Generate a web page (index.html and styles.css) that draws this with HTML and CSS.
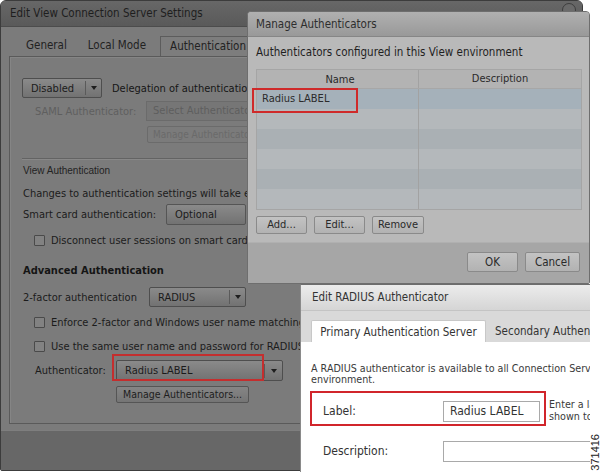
FILE: index.html
```html
<!DOCTYPE html>
<html>
<head>
<meta charset="utf-8">
<link rel="stylesheet" href="styles.css">
</head>
<body>
<div class="screen">
  <div class="main">
    <div class="main-title">
      <span>Edit View Connection Server Settings</span>
      <span class="close-icon"></span>
    </div>
    <div class="main-body">
      <div class="tabs">
        <div class="tab">General</div>
        <div class="tab">Local Mode</div>
        <div class="tab active">Authentication</div>
      </div>
      <div class="panel">
        <div class="row r-deleg">
          <div class="dd dd-disabled"><span class="dd-text">Disabled</span><span class="dd-btn"><i class="arrow"></i></span></div>
          <span class="strong-text">Delegation of authentication to VMware Horizon (SAML 2.0 Authenticator)</span>
        </div>
        <div class="row r-saml">
          <span class="muted label-saml">SAML Authenticator:</span>
          <div class="box-disabled">Select Authenticator</div>
        </div>
        <div class="row r-mgdis">
          <div class="btn-disabled">Manage Authenticators...</div>
        </div>
        <div class="sep"></div>
        <div class="small-head">View Authentication</div>
        <div class="row r-changes">Changes to authentication settings will take effect on the next user login.</div>
        <div class="row r-smart">
          <span class="lbl-smart">Smart card authentication:</span>
          <div class="dd dd-optional"><span class="dd-text">Optional</span></div>
        </div>
        <div class="row r-check1">
          <span class="cb"></span><span>Disconnect user sessions on smart card removal</span>
        </div>
        <div class="adv-head">Advanced Authentication</div>
        <div class="row r-2fa">
          <span class="lbl-2fa">2-factor authentication</span>
          <div class="dd dd-radius"><span class="dd-text">RADIUS</span><span class="dd-btn"><i class="arrow"></i></span></div>
        </div>
        <div class="row r-check2">
          <span class="cb"></span><span>Enforce 2-factor and Windows user name matching</span>
        </div>
        <div class="row r-check3">
          <span class="cb"></span><span>Use the same user name and password for RADIUS and Windows authentication</span>
        </div>
        <div class="row r-auth">
          <span class="lbl-auth">Authenticator:</span>
          <div class="dd dd-auth"><span class="dd-text">Radius LABEL</span><span class="dd-btn"><i class="arrow"></i></span></div>
        </div>
        <div class="row r-mg">
          <div class="btn-main">Manage Authenticators...</div>
        </div>
      </div>
    </div>
    <div class="main-footer"></div>
  </div>

  <div class="manage">
    <div class="manage-title">Manage Authenticators</div>
    <div class="manage-body">
      <div class="manage-intro">Authenticators configured in this View environment</div>
      <div class="grid">
        <div class="grid-head"><span class="c1">Name</span><span class="c2">Description</span></div>
        <div class="grid-row sel"><span class="c1">Radius LABEL</span><span class="c2"></span></div>
        <div class="grid-row odd"><span class="c1"></span><span class="c2"></span></div>
        <div class="grid-row even"><span class="c1"></span><span class="c2"></span></div>
        <div class="grid-row odd"><span class="c1"></span><span class="c2"></span></div>
        <div class="grid-row even"><span class="c1"></span><span class="c2"></span></div>
        <div class="grid-row odd"><span class="c1"></span><span class="c2"></span></div>
      </div>
      <div class="grid-btns">
        <div class="mbtn">Add...</div>
        <div class="mbtn">Edit...</div>
        <div class="mbtn">Remove</div>
      </div>
    </div>
    <div class="manage-footer">
      <div class="mbtn ok">OK</div>
      <div class="mbtn cancel">Cancel</div>
    </div>
  </div>

  <div class="radius">
    <div class="radius-title">Edit RADIUS Authenticator</div>
    <div class="radius-tabs">
      <div class="rtab active">Primary Authentication Server</div>
      <div class="rtab">Secondary Authentication Server</div>
    </div>
    <div class="radius-body">
      <p class="radius-note">A RADIUS authenticator is available to all Connection Server instances in this<br>environment.</p>
      <div class="field f-label">
        <span class="f-name">Label:</span>
        <div class="input">Radius LABEL</div>
        <div class="hint">Enter a label that will be<br>shown to users</div>
      </div>
      <div class="field f-desc">
        <span class="f-name">Description:</span>
        <div class="input wide"></div>
      </div>
    </div>
  </div>

  <div class="mark m1"></div>
  <div class="mark m2"></div>
  <div class="mark m3"></div>
  <div class="figno">371416</div>
</div>
</body>
</html>
```

FILE: styles.css
```css
* { box-sizing: border-box; }
html, body { margin: 0; padding: 0; }
body { background: #ffffff; font-family: "DejaVu Sans", "Liberation Sans", sans-serif; font-stretch: condensed; }
.screen { position: relative; width: 602px; height: 472px; overflow: hidden; background: #fff; }

/* main dimmed dialog */
.main {
  width: 583px; height: 471px;
  background: #7b7b7b;
  border: 1px solid #3c3c3c;
  border-radius: 6px 6px 2px 2px;
  display: flex; flex-direction: column;
  overflow: hidden;
  color: #1b1b1b;
  font-size: 11px;
}
.main-title {
  height: 26px; flex: none;
  background: linear-gradient(#676767, #5a5a5a);
  border-bottom: 1px solid #4c4c4c;
  padding-left: 9px;
  font-size: 11.5px; line-height: 25px; color: #1e1e1e;
  position: relative;
}
.close-icon {
  position: absolute; right: 6px; top: 2px;
  width: 14px; height: 14px; border-radius: 50%;
  border: 1px solid #3e3e3e; background: #6a6a6a;
}
.main-body { flex: 1; padding: 9px 8px 0 8px; display: flex; flex-direction: column; }
.tabs { display: flex; height: 20px; padding-left: 8px; gap: 3px; }
.tab { padding: 0 9px; line-height: 19px; font-size: 11.5px; color: #222; }
.tab.active { border: 1px solid #5c5c5c; border-bottom: none; background: #7d7d7d; margin-left: 2px; }
.panel {
  height: 368px;
  border: 1px solid #5a5a5a;
  box-shadow: inset 1px 1px 0 #858585;
  padding: 21px 0 0 12px;
}
.row { display: flex; align-items: center; white-space: nowrap; }
.row > * { flex: none; }
.r-deleg { height: 20px; gap: 10px; }
.dd {
  position: relative; height: 20px; display: flex; align-items: center;
  border: 1px solid #4e4e4e; border-radius: 2px;
  background: linear-gradient(#8a8a8a, #727272);
  color: #1b1b1b;
}
.dd-text { padding-left: 8px; flex: 1; }
.dd-btn { width: 16px; height: 14px; border-left: 1px solid #5a5a5a; display: flex; align-items: center; justify-content: center; }
.arrow { width: 0; height: 0; border-left: 3px solid transparent; border-right: 3px solid transparent; border-top: 4px solid #1e1e1e; }
.dd-disabled { width: 80px; }
.strong-text { color: #161616; }
.r-saml { height: 20px; margin-top: 3px; }
.muted { color: #5f5f5f; }
.label-saml { margin-left: 13px; width: 111px; }
.box-disabled {
  width: 120px; height: 20px; border: 1px solid #6b6b6b; background: #767676;
  color: #5e5e5e; padding-left: 6px; line-height: 18px;
}
.r-mgdis { height: 17px; margin-top: 5px; padding-left: 125px; }
.btn-disabled {
  height: 17px; width: 110px; border: 1px solid #6b6b6b; border-radius: 2px;
  color: #6a6a6a; font-size: 10px; line-height: 15px; padding-left: 5px; overflow: hidden;
}
.sep { height: 1px; background: #636363; margin-top: 15px; box-shadow: 0 1px 0 #888; }
.small-head { font-family: "Liberation Sans", sans-serif; font-size: 10px; color: #232323; margin-top: 6px; margin-left: 1px; height: 12px; line-height: 12px; }
.r-changes { margin-top: 9px; height: 14px; margin-left: 1px; }
.r-smart { margin-top: 3px; height: 22px; margin-left: 1px; }
.lbl-smart { width: 143px; }
.dd-optional { width: 80px; height: 21px; border-color: #555; }
.cb { width: 11px; height: 11px; border: 1px solid #4a4a4a; background: #828282; margin-right: 6px; border-radius: 1px; }
.r-check1 { margin-top: 8px; height: 14px; margin-left: 12px; }
.adv-head { font-weight: bold; margin-top: 17px; margin-left: 1px; height: 14px; line-height: 14px; color: #151515; }
.r-2fa { margin-top: 9px; height: 20px; margin-left: 1px; }
.lbl-2fa { width: 126px; }
.dd-radius { width: 97px; }
.r-check2 { margin-top: 8px; height: 14px; margin-left: 12px; }
.r-check3 { margin-top: 10px; height: 14px; margin-left: 12px; }
.r-auth { margin-top: 7px; height: 21px; margin-left: 13px; }
.lbl-auth { width: 81px; }
.dd-auth { width: 167px; height: 21px; }
.dd-auth .dd-btn { width: 18px; }
.r-mg { margin-top: 5px; padding-left: 94px; }
.btn-main {
  height: 17px; padding: 0 6px; border: 1px solid #555; border-radius: 2px;
  background: linear-gradient(#858585, #757575); font-size: 10.5px; line-height: 15px; color: #1e1e1e;
}
.main-footer { height: 42px; flex: none; margin-top: 6px; background: #676767; border-top: 1px solid #7e7e7e; }

/* manage authenticators */
.manage {
  position: absolute; left: 247px; top: 11px; width: 343px; height: 273px;
  background: #b9b9b9; border: 1px solid #6e6e6e; border-radius: 4px 4px 2px 2px;
  display: flex; flex-direction: column; overflow: hidden;
  font-size: 11px; color: #2a2a2a;
}
.manage-title {
  height: 25px; flex: none; padding-left: 8px; line-height: 24px; font-size: 11.5px; color: #2e2e2e;
  background: linear-gradient(#b0b0b0, #999999); border-bottom: 1px solid #868686;
}
.manage-body { flex: 1; padding: 8px 8px 0 8px; }
.manage-intro { height: 15px; line-height: 15px; font-size: 11.5px; color: #1f1f1f; }
.grid { margin-top: 9px; border: 1px solid #a5a5a5; width: 326px; }
.grid-head, .grid-row { display: flex; height: 20px; }
.grid-head { background: #b3b3b3; border-bottom: 1px solid #a7a7a7; height: 19px; line-height: 18px; color: #2a2a2a; }
.grid-head .c1, .grid-head .c2 { text-align: center; }
.c1 { width: 162px; border-right: 1px solid #a2a2a2; padding-left: 5px; line-height: 19px; }
.c2 { flex: 1; }
.grid-row.sel { background: #a5b1ba; color: #2b2b2b; }
.grid-row.odd { background: #b4b8bb; }
.grid-row.even { background: #aab0b4; }
.grid-btns { display: flex; gap: 7px; margin-top: 6px; }
.mbtn {
  height: 18px; width: 51px; border: 1px solid #8a8a8a; border-radius: 2px;
  background: linear-gradient(#c3c3c3, #b2b2b2); text-align: center; line-height: 16px; font-size: 11px; color: #2a2a2a;
}
.grid-btns .mbtn:nth-child(3) { width: 52px; }
.manage-footer {
  height: 41px; flex: none; background: #a6a6a6; border-top: 1px solid #b0b0b0;
  display: flex; justify-content: flex-end; align-items: flex-start; gap: 7px; padding: 9px 9px 0 0;
}
.mbtn.ok, .mbtn.cancel { height: 20px; line-height: 18px; font-size: 11.5px; }
.mbtn.cancel { width: 55px; }

/* edit radius */
.radius {
  position: absolute; left: 300px; top: 284px; width: 290px; height: 188px;
  background: #fff; border-top: 1px solid #6d6d6d; border-left: 1px solid #8a8a8a;
  overflow: hidden; font-size: 11px; color: #333;
}
.radius-title {
  height: 26px; padding-left: 11px; line-height: 25px; font-size: 11.5px; color: #333;
  background: linear-gradient(#ececec, #d5d5d5); border-bottom: 1px solid #c4c4c4;
  white-space: nowrap;
}
.radius-tabs { height: 31px; background: #d9d9d9; display: flex; align-items: flex-end; padding-left: 10px; gap: 0; white-space: nowrap; }
.rtab { height: 22px; line-height: 22px; font-size: 11.5px; color: #333; padding: 0 9px; flex: none; }
.rtab.active { background: #fff; border: 1px solid #c8c8c8; border-bottom: none; border-radius: 2px 2px 0 0; width: 175px; padding: 0; text-align: center; }
.radius-body { padding: 21px 0 0 10px; }
.radius-note { margin: 0; font-size: 9.6px; line-height: 11px; color: #3a3a3a; white-space: nowrap; font-stretch: normal; }
.field { display: flex; align-items: center; white-space: nowrap; }
.field > * { flex: none; }
.f-label { margin-top: 9px; height: 34px; padding-left: 12px; }
.f-name { width: 120px; font-size: 12px; color: #333; }
.input { height: 21px; width: 97px; border: 1px solid #a9a9a9; line-height: 19px; padding-left: 6px; font-size: 12px; color: #333; overflow: hidden; }
.input.wide { width: 160px; }
.hint { margin-left: 9px; font-size: 9.6px; line-height: 12px; color: #3a3a3a; font-stretch: normal; }
.f-desc { margin-top: 13px; height: 20px; padding-left: 12px; }

/* red annotation marks */
.mark { position: absolute; border: 2px solid #d1252b; }
.m1 { left: 112px; top: 354px; width: 152px; height: 27px; border-color: #c42e2e; }
.m2 { left: 252px; top: 88px; width: 106px; height: 25px; border-color: #cf2a2a; }
.m3 { left: 310px; top: 391px; width: 236px; height: 35px; }

.figno {
  position: absolute; left: 589px; top: 434px;
  writing-mode: vertical-rl; transform: rotate(180deg);
  font-family: "Liberation Sans", sans-serif; font-size: 11px; color: #222; line-height: 12px;
}
```
